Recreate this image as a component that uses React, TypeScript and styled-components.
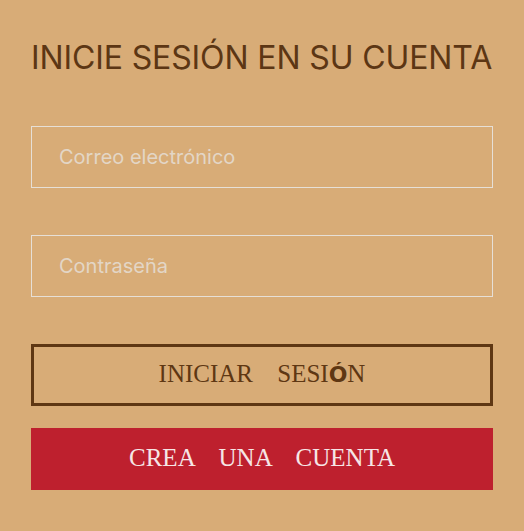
import { createGlobalStyle, styled } from 'styled-components';

const GlobalStyle = createGlobalStyle`
  html, body {
    margin: 0;
    padding: 0;
    background-color: #d8ac77;
  }
`;

const Container = styled.main`
  box-sizing: border-box;
  width: 524px;
  min-height: 531px;
  padding: 38px 31px 0;
  background-color: #d8ac77;
  display: flex;
  flex-direction: column;
`;

const Title = styled.h1`
  margin: 0 0 48px;
  font-family: Inter, 'Noto Sans', sans-serif;
  font-weight: 400;
  font-size: 32px;
  line-height: 40px;
  letter-spacing: -0.12px;
  color: #5c3614;
  white-space: nowrap;
`;

const Form = styled.form`
  display: flex;
  flex-direction: column;
`;

const Input = styled.input<{ $gap: number }>`
  box-sizing: border-box;
  width: 100%;
  height: 62px;
  margin: 0 0 ${(p) => p.$gap}px;
  padding: 0 27px;
  border: 1px solid #e6dfd6;
  border-radius: 0;
  background: transparent;
  font-family: Inter, 'Noto Sans', sans-serif;
  font-size: 20px;
  color: #5c3614;
  outline: none;

  &::placeholder {
    color: #e3d6c6;
  }
`;

const Button = styled.button<{ $variant: 'outline' | 'filled' }>`
  box-sizing: border-box;
  width: 100%;
  height: 62px;
  padding: 0 0 3px;
  border: ${(p) => (p.$variant === 'outline' ? '3px solid #5e3713' : 'none')};
  background: ${(p) => (p.$variant === 'outline' ? 'transparent' : '#be202e')};
  color: ${(p) => (p.$variant === 'outline' ? '#5e3713' : '#f6e6e6')};
  font-family: 'Liberation Serif', 'DejaVu Serif', serif;
  font-size: 25px;
  word-spacing: 18px;
  cursor: pointer;
  margin-bottom: 22px;
`;

const Accent = styled.span`
  font-family: 'DejaVu Sans', sans-serif;
  font-weight: 700;
  font-size: 22px;
`;

export default function App() {
  return (
    <>
      <GlobalStyle />
      <Container>
        <Title>INICIE SESIÓN EN SU CUENTA</Title>
        <Form onSubmit={(e) => e.preventDefault()}>
          <Input $gap={47} type="email" placeholder="Correo electrónico" />
          <Input $gap={47} type="password" placeholder="Contraseña" />
          <Button $variant="outline" type="submit">
            INICIAR SESI<Accent>Ó</Accent>N
          </Button>
          <Button $variant="filled" type="button">
            CREA UNA CUENTA
          </Button>
        </Form>
      </Container>
    </>
  );
}
